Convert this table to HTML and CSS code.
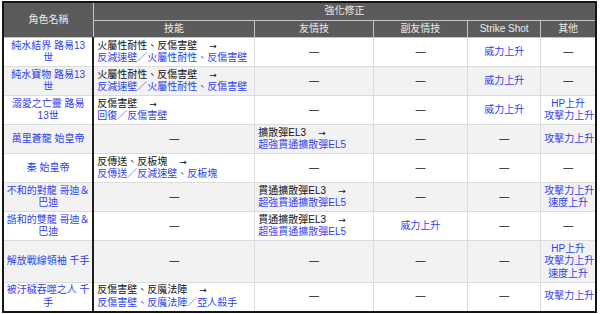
FILE: index.html
```html
<!DOCTYPE html>
<html lang="zh-Hant">
<head>
<meta charset="utf-8">
<link rel="stylesheet" href="styles.css">
</head>
<body>
<table class="tbl">
  <colgroup>
    <col class="c1"><col class="c2"><col class="c3"><col class="c4"><col class="c5"><col class="c6">
  </colgroup>
  <thead>
    <tr>
      <th rowspan="2" class="hname">角色名稱</th>
      <th colspan="5">強化修正</th>
    </tr>
    <tr>
      <th>技能</th><th>友情技</th><th>副友情技</th><th>Strike Shot</th><th>其他</th>
    </tr>
  </thead>
  <tbody>
    <tr>
      <td class="name">純水結界 路易13<br>世</td>
      <td class="l">火屬性耐性、反傷害壁<span class="arr">→</span><br><span class="b">反減速壁／火屬性耐性、反傷害壁</span></td>
      <td>—</td><td>—</td><td class="b">威力上升</td><td>—</td>
    </tr>
    <tr class="alt">
      <td class="name">純水寶物 路易13<br>世</td>
      <td class="l">火屬性耐性、反傷害壁<span class="arr">→</span><br><span class="b">反減速壁／火屬性耐性、反傷害壁</span></td>
      <td>—</td><td>—</td><td class="b">威力上升</td><td>—</td>
    </tr>
    <tr>
      <td class="name">溺愛之亡靈 路易<br>13世</td>
      <td class="l">反傷害壁<span class="arr">→</span><br><span class="b">回復／反傷害壁</span></td>
      <td>—</td><td>—</td><td class="b">威力上升</td><td class="b">HP上升<br>攻擊力上升</td>
    </tr>
    <tr class="alt">
      <td class="name">萬里蒼龍 始皇帝</td>
      <td>—</td>
      <td class="l">擴散彈EL3<span class="arr">→</span><br><span class="b">超強貫通擴散彈EL5</span></td>
      <td>—</td><td>—</td><td class="b">攻擊力上升</td>
    </tr>
    <tr>
      <td class="name">秦 始皇帝</td>
      <td class="l">反傳送、反板塊<span class="arr">→</span><br><span class="b">反傳送／反減速壁、反板塊</span></td>
      <td>—</td><td>—</td><td>—</td><td>—</td>
    </tr>
    <tr class="alt">
      <td class="name">不和的對龍 哥迪＆<br>巴迪</td>
      <td>—</td>
      <td class="l">貫通擴散彈EL3<span class="arr">→</span><br><span class="b">超強貫通擴散彈EL5</span></td>
      <td>—</td><td>—</td><td class="b">攻擊力上升<br>速度上升</td>
    </tr>
    <tr>
      <td class="name">諧和的雙龍 哥迪＆<br>巴迪</td>
      <td>—</td>
      <td class="l">貫通擴散彈EL3<span class="arr">→</span><br><span class="b">超強貫通擴散彈EL5</span></td>
      <td class="b">威力上升</td><td>—</td><td>—</td>
    </tr>
    <tr class="alt">
      <td class="name">解放戰線領袖 千手</td>
      <td>—</td><td>—</td><td>—</td><td>—</td>
      <td class="b">HP上升<br>攻擊力上升<br>速度上升</td>
    </tr>
    <tr>
      <td class="name">被汙穢吞噬之人 千<br>手</td>
      <td class="l">反傷害壁、反魔法陣<span class="arr">→</span><br><span class="b">反傷害壁、反魔法陣／亞人殺手</span></td>
      <td>—</td><td>—</td><td>—</td><td class="b">攻擊力上升</td>
    </tr>
  </tbody>
</table>
</body>
</html>
```

FILE: styles.css
```css
html, body {
  margin: 0;
  padding: 0;
  background: #ffffff;
}
body {
  padding: 1px 0 0 2px;
  font-family: "Liberation Sans", "Noto Sans CJK TC", sans-serif;
  font-size: 10px;
  line-height: 12.5px;
  color: #111111;
}
.tbl {
  border-collapse: collapse;
  table-layout: fixed;
  width: 595px;
  border: 2px solid #161616;
}
.c1 { width: 90px; }
.c2 { width: 161px; }
.c3 { width: 118px; }
.c4 { width: 94px; }
.c5 { width: 73px; }
.c6 { width: 55px; }
.tbl th {
  background: #5b5b5b;
  color: #ececec;
  font-weight: normal;
  border: 1px solid #c4c4c4;
  padding: 2px 2px;
  text-align: center;
  vertical-align: middle;
  white-space: nowrap;
}
.tbl td {
  border: 1px solid #dcdcdc;
  padding: 1.5px 3px;
  text-align: center;
  vertical-align: middle;
  white-space: nowrap;
  background: #ffffff;
}
.tbl tr.alt td {
  background: #f2f2f2;
}
.tbl td.name {
  color: #2f3ff0;
  padding: 1.5px 2px;
  border-right: 2px solid #1e1e1e;
}
.tbl td.l {
  text-align: left;
}
.arr {
  font-family: "DejaVu Sans", sans-serif;
  font-size: 9px;
  margin-left: 12px;
}
.b {
  color: #2f3ff0;
}
```
